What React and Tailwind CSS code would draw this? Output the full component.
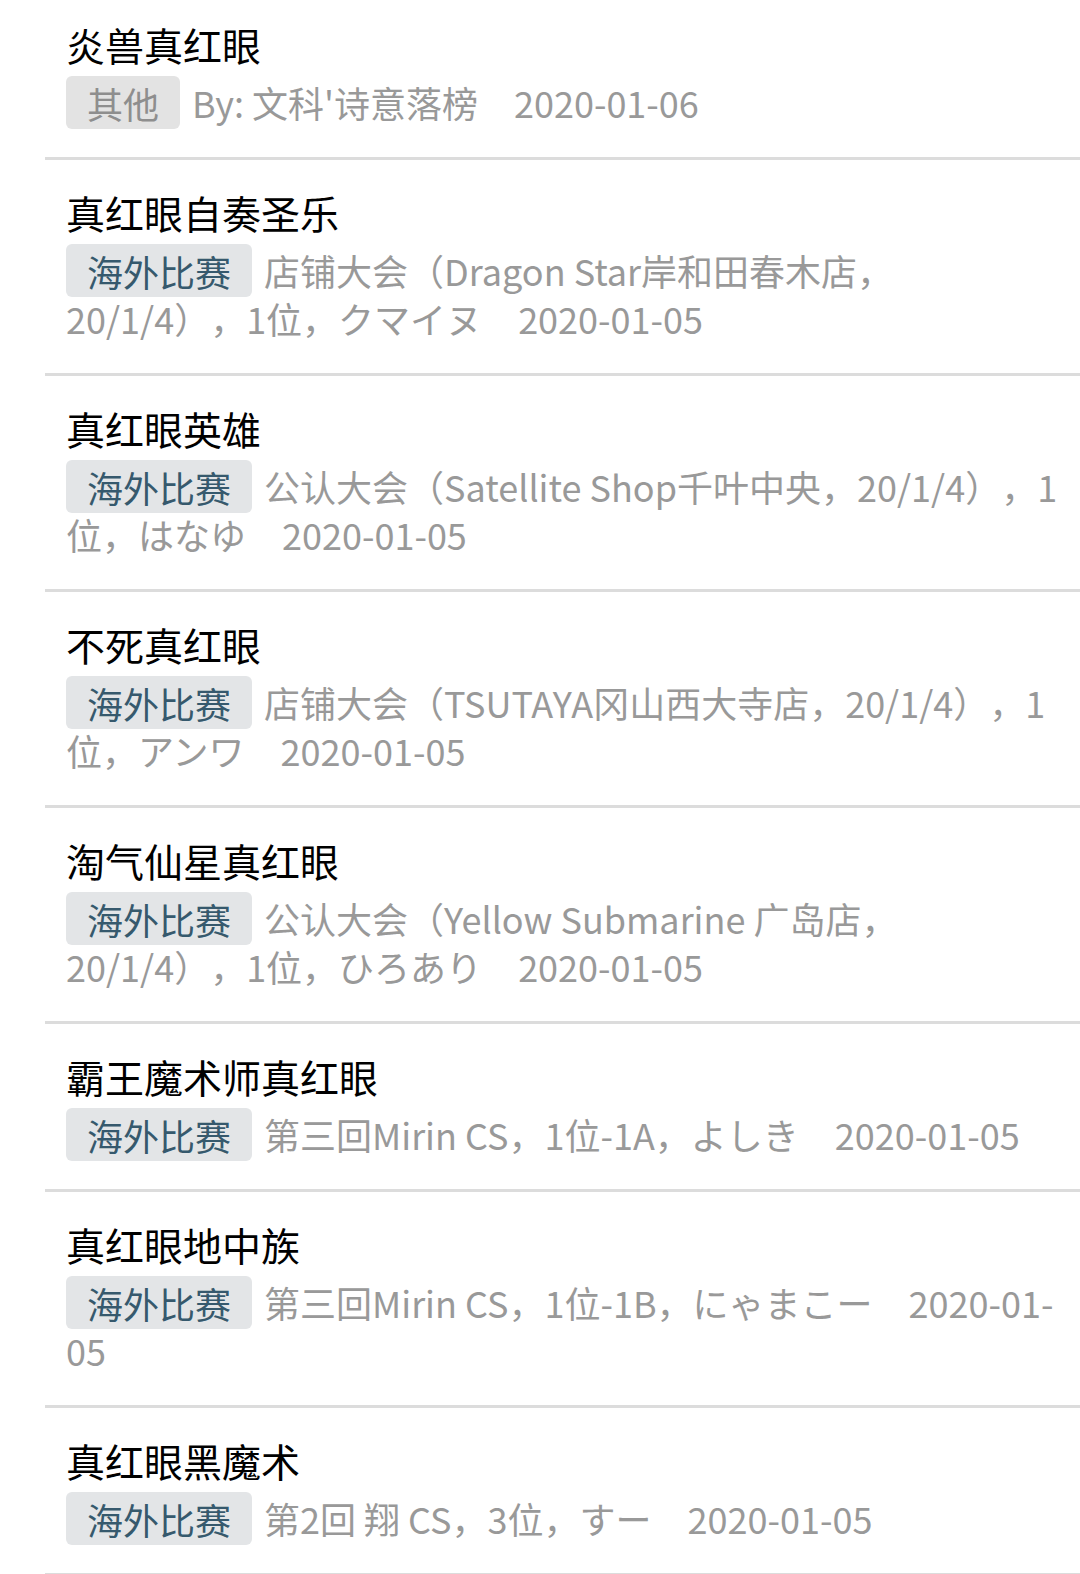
import React from "react";

const items = [
  { title: "炎兽真红眼", tag: "其他", other: true, text: ["By: 文科'诗意落榜"], date: ["2020-01-06"] },
  { title: "真红眼自奏圣乐", tag: "海外比赛", text: ["店铺大会（Dragon Star岸和田春木店，", "20/1/4），1位，クマイヌ"], date: ["2020-01-05"] },
  { title: "真红眼英雄", tag: "海外比赛", text: ["公认大会（Satellite Shop千叶中央，20/1/4），1", "位，はなゆ"], date: ["2020-01-05"] },
  { title: "不死真红眼", tag: "海外比赛", text: ["店铺大会（TSUTAYA冈山西大寺店，20/1/4），1", "位，アンワ"], date: ["2020-01-05"] },
  { title: "淘气仙星真红眼", tag: "海外比赛", text: ["公认大会（Yellow Submarine 广岛店，", "20/1/4），1位，ひろあり"], date: ["2020-01-05"] },
  { title: "霸王魔术师真红眼", tag: "海外比赛", text: ["第三回Mirin CS，1位-1A，よしき"], date: ["2020-01-05"] },
  { title: "真红眼地中族", tag: "海外比赛", text: ["第三回Mirin CS，1位-1B，にゃまこー"], date: ["2020-01-", "05"] },
  { title: "真红眼黑魔术", tag: "海外比赛", text: ["第2回 翔 CS，3位，すー"], date: ["2020-01-05"] },
];

function Lines({ parts }) {
  return parts.map((p, i) => (
    <React.Fragment key={i}>
      {i > 0 && <br />}
      {p}
    </React.Fragment>
  ));
}

export default function App() {
  return (
    <div
      className="w-[1080px] h-[1574px] overflow-hidden bg-white [text-spacing-trim:space-all]"
      style={{ fontFamily: '"Noto Sans CJK SC", "Noto Sans", sans-serif' }}
    >
      <ul className="ml-[45px] -mt-[8px]">
        {items.map((it, idx) => (
          <li key={idx} className="border-b-[3px] border-[#dcdcdc] pl-[21px] pr-[12px] pt-[28px] pb-[31px]">
            <div className="text-[39px] leading-[48px] text-black">{it.title}</div>
            <div className="mt-[10px] text-[36px] leading-[48px] text-[#999999]">
              <span
                className={
                  "rounded-[6px] px-[21px] py-[0.5px] mr-[12px] " +
                  (it.other ? "bg-[#e3e3e3] text-[#8e8e8e]" : "bg-[#e3e5e7] text-[#36596d]")
                }
              >
                {it.tag}
              </span>
              <Lines parts={it.text} />
              <span className="ml-[36px]">
                <Lines parts={it.date} />
              </span>
            </div>
          </li>
        ))}
      </ul>
    </div>
  );
}
